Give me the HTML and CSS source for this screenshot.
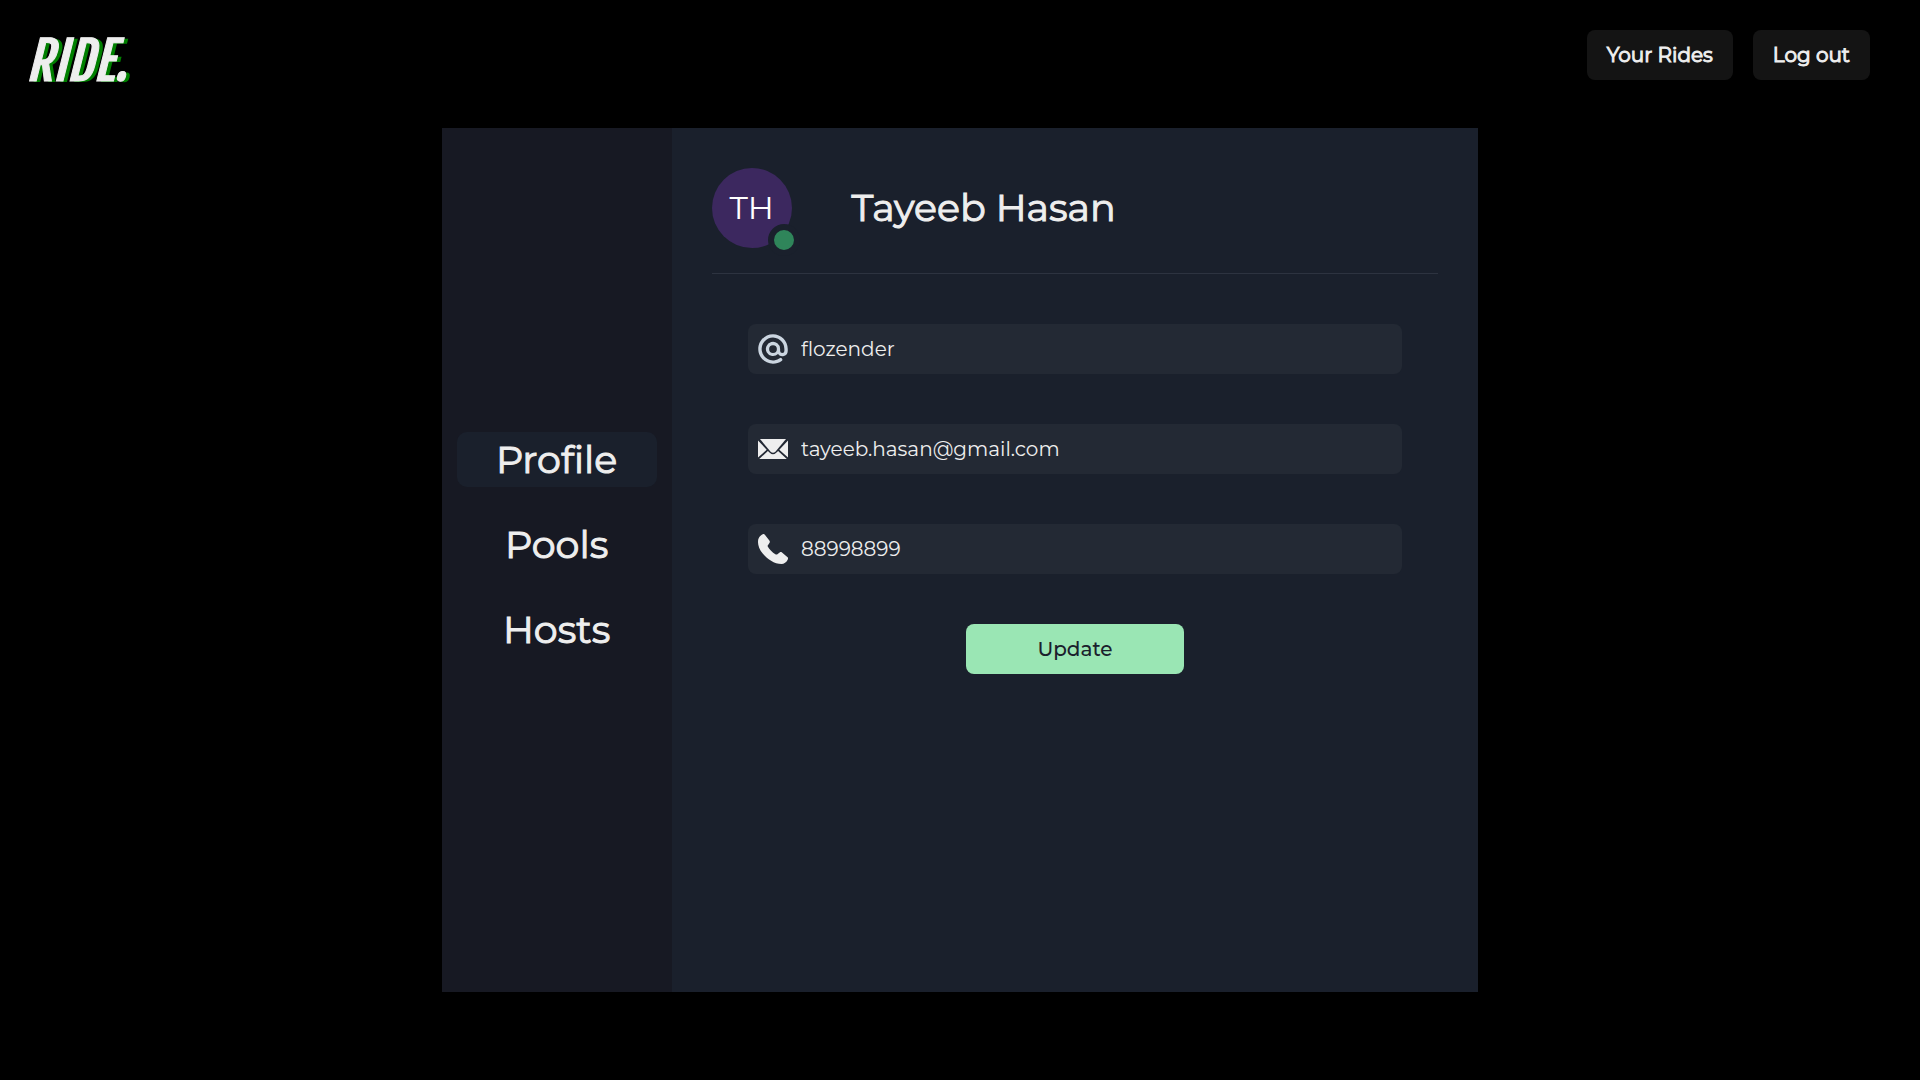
FILE: index.html
```html
<!DOCTYPE html>
<html lang="en">
<head>
  <meta charset="utf-8">
  <meta name="viewport" content="width=device-width, initial-scale=1">
  <title>Ride - Profile</title>
  <link rel="stylesheet" href="styles.css">
</head>
<body>
  <header class="topbar">
    <a class="logo" href="#">RIDE.</a>
    <div class="actions">
      <button class="action" type="button">Your Rides</button>
      <button class="action" type="button">Log out</button>
    </div>
  </header>

  <main class="card">
    <nav class="sidebar">
      <a class="tab tab-active" href="#profile">Profile</a>
      <a class="tab" href="#pools">Pools</a>
      <a class="tab" href="#hosts">Hosts</a>
    </nav>

    <section class="panel">
      <div class="identity">
        <div class="avatar">TH<span class="status"></span></div>
        <h1 class="name">Tayeeb Hasan</h1>
      </div>

      <form class="form">
        <label class="field">
          <svg class="icon icon-at" viewBox="0 0 24 24" aria-label="Username">
            <path fill="currentColor" d="M12 .2C5.500.2.200 5.500.200 12S5.500 23.800 12 23.800c2.500 0 4.900-.800 6.900-2.200a1.350 1.350 0 0 0-1.600-2.200A9.100 9.100 0 1 1 21.100 12v1.500a1.700 1.700 0 0 1-3.400 0V12A5.700 5.700 0 1 0 16 16.050a4.350 4.350 0 0 0 7.800-2.550V12C23.800 5.500 18.500.2 12 .2zm0 14.900a3.100 3.100 0 1 1 0-6.200 3.100 3.100 0 0 1 0 6.200z"/>
          </svg>
          <input class="input" type="text" value="flozender">
        </label>
        <label class="field">
          <svg class="icon" viewBox="0 0 30 30" aria-label="Email">
            <path fill="currentColor" d="M2 5h26L17.600 17.400q-2.600 2.600-5.200 0z"/>
            <path fill="currentColor" d="M0 6.400l8.700 9.300L0 23.600z M30 6.400l-8.700 9.300L30 23.600z"/>
            <path fill="currentColor" d="M1.200 25l8.700-8.100 1.900 1.800q3.200 3 6.400 0l1.900-1.800L28.800 25z"/>
          </svg>
          <input class="input" type="email" value="tayeeb.hasan@gmail.com">
        </label>
        <label class="field">
          <svg class="icon" viewBox="0 0 14 14" aria-label="Phone">
            <path fill="currentColor" d="M2.205.141c-.556.304-1.236.874-1.550 1.302C.140 2.147 0 2.900 0 3.800c0 1.500.700 3.500 2.200 5.300 2.100 2.600 5.400 4.900 8.800 4.900 1.100 0 2.300-.8 2.900-2.100.2-.5.2-.8-.1-1.100l-2.600-2.200c-.4-.3-.7-.3-1.100 0l-.9.700c-.4.3-.7.300-1.100.100C6.700 8.500 5.300 7.100 4.600 5.900c-.2-.3-.1-.6.200-.9l.6-.9c.2-.4.2-.7-.1-1.100L3.200.3C2.900 0 2.600-.080 2.205.141z"/>
          </svg>
          <input class="input" type="tel" value="88998899">
        </label>
        <button class="update" type="submit">Update</button>
      </form>
    </section>
  </main>
</body>
</html>
```
FILE: styles.css
```css
* {
  box-sizing: border-box;
}

body {
  margin: 0;
  min-height: 100vh;
  background: #000;
  color: #eee;
  font-family: Montserrat, Inter, "Liberation Sans", sans-serif;
  font-size: 20px;
  line-height: 30px;
}

button,
input {
  font: inherit;
  color: inherit;
  border: 0;
}

.topbar {
  display: flex;
  justify-content: space-between;
  align-items: flex-start;
  height: 128px;
  padding: 30px 50px 0 26px;
}

.logo {
  font-family: "Fjalla One", "Open Sans", sans-serif;
  font-size: 52px;
  line-height: 64px;
  font-weight: 400;
  font-style: italic;
  color: #eee;
  text-decoration: none;
  text-shadow: 4px 1px 0 #008000;
  -webkit-text-stroke: 1px #eee;
}

.actions {
  display: flex;
  gap: 20px;
}

.action {
  height: 50px;
  padding: 0 20px;
  border-radius: 8px;
  background: #141414;
  -webkit-text-stroke: 1px #eee;
}

.card {
  display: flex;
  width: 54%;
  min-height: 80vh;
  margin: 0 auto;
  background: #1a202c;
}

.sidebar {
  display: flex;
  flex-direction: column;
  justify-content: center;
  gap: 30px;
  width: 230px;
  padding: 0 15px 32px;
  background: #171923;
}

.tab {
  height: 55px;
  border-radius: 10px;
  color: #eee;
  font-size: 38px;
  line-height: 55px;
  text-align: center;
  text-decoration: none;
  -webkit-text-stroke: 1px #eee;
}

.tab-active {
  background: #1a202c;
}

.panel {
  flex: 1;
  padding: 40px;
}

.identity {
  display: flex;
  align-items: center;
  gap: 60px;
  padding-bottom: 25px;
  border-bottom: 1px solid #2d3340;
}

.avatar {
  position: relative;
  width: 80px;
  height: 80px;
  border-radius: 50%;
  background: #3c285f;
  color: #fff;
  font-size: 32px;
  line-height: 80px;
  text-align: center;
}

.status {
  position: absolute;
  right: -8px;
  bottom: -8px;
  width: 32px;
  height: 32px;
  border: 6px solid #1a202c;
  border-radius: 50%;
  background: #2f855a;
}

.name {
  margin: 0;
  font-size: 38px;
  line-height: 48px;
  font-weight: 400;
  -webkit-text-stroke: 1px #eee;
}

.form {
  display: flex;
  flex-direction: column;
  align-items: center;
  gap: 50px;
  padding-top: 50px;
}

.field {
  display: flex;
  align-items: center;
  gap: 13px;
  width: 90%;
  height: 50px;
  padding: 0 10px;
  border-radius: 8px;
  background: #232934;
}

.icon {
  flex: none;
  width: 30px;
  height: 30px;
}

.icon-at {
  color: #cbd5e0;
}

.input {
  flex: 1;
  min-width: 0;
  height: 50px;
  padding: 0;
  background: transparent;
  outline: 0;
}

.update {
  width: 30%;
  height: 50px;
  border-radius: 8px;
  background: #9ae6b4;
  color: #1a202c;
  font-weight: 500;
}
```
